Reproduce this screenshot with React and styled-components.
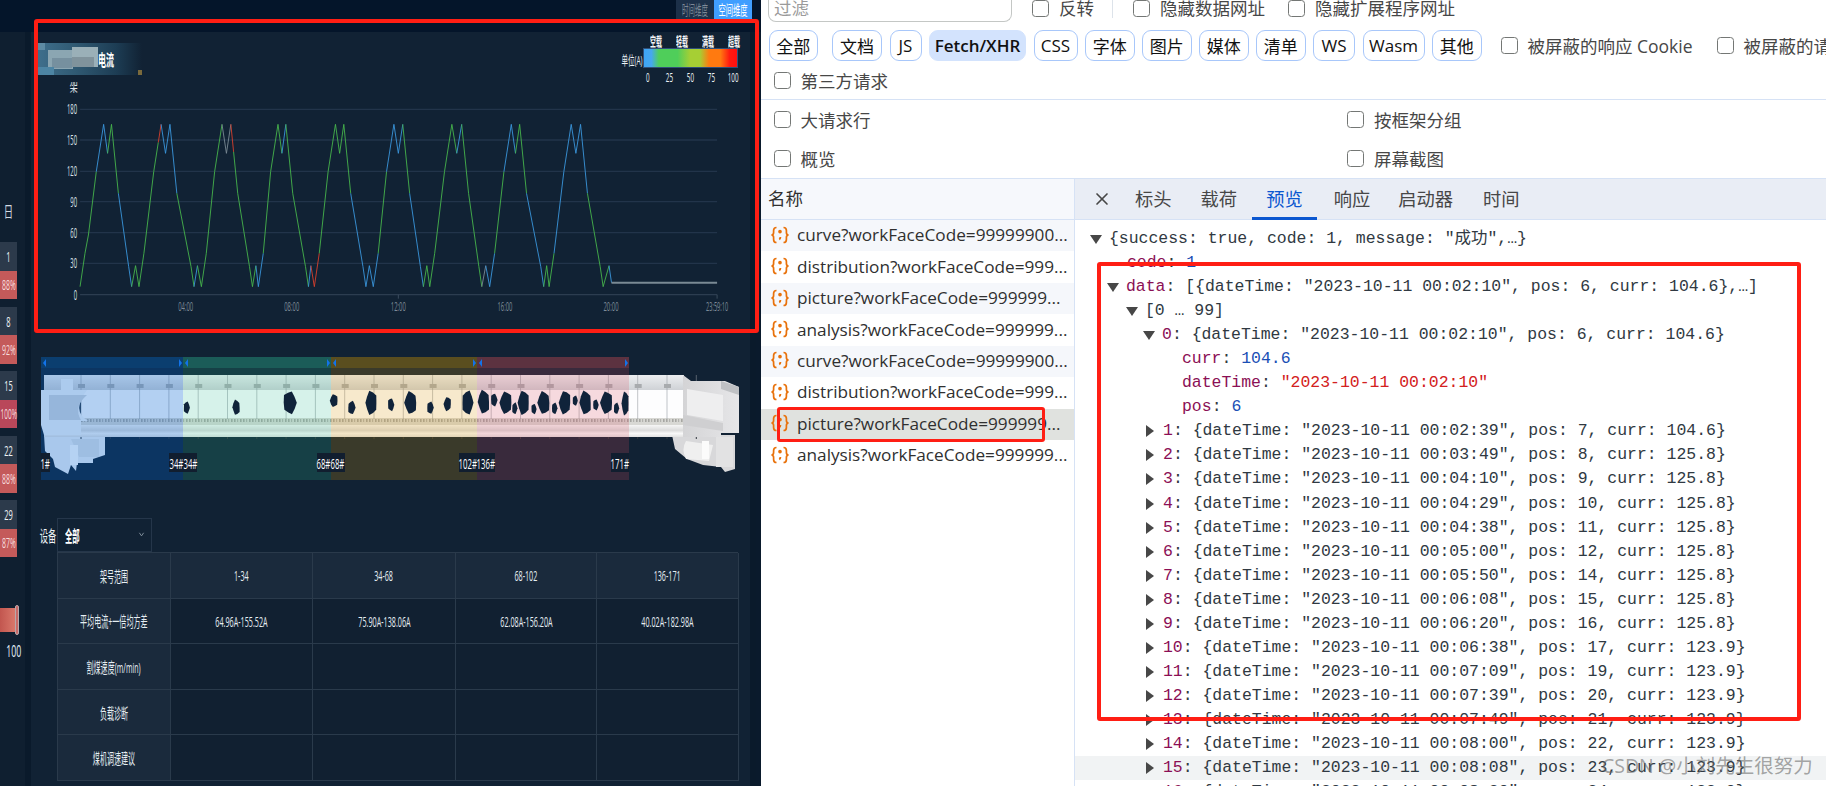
import React from 'react';
import styled, { createGlobalStyle } from 'styled-components';
import { ChevronDown, X } from 'lucide-react';

const CJK = '"Open Sans", "Noto Sans CJK SC", sans-serif';
const MONO = '"Liberation Mono", "Noto Sans CJK SC", monospace';

const GlobalStyle = createGlobalStyle`
  html, body { margin: 0; padding: 0; background: #fff; }
  body { font-family: ${CJK}; overflow: hidden; }
  * { box-sizing: border-box; }
`;

const Shell = styled.div`
  position: relative;
  display: flex;
  width: 1826px;
  height: 786px;
  overflow: hidden;
`;

/* ---------- left dashboard ---------- */

const LeftPane = styled.div`
  display: flex;
  flex-direction: column;
  flex: 0 0 761px;
  height: 786px;
  background: #0a1a2c;
  color: #dfe7ee;
`;

const TopBar = styled.div`
  display: flex;
  justify-content: flex-end;
  height: 32px;
  flex: none;
  padding-right: 9px;
  background: #04152a;
`;

const ModeButton = styled.div`
  display: flex;
  align-items: center;
  justify-content: center;
  width: 38px;
  height: 19px;
  font-size: 14px;
  line-height: 16px;
  color: ${p => (p.$active ? '#fff' : '#7d8997')};
  background: ${p => (p.$active ? '#409eff' : '#1c3049')};
`;

const Squeezed = styled.span`
  display: inline-block;
  flex: none;
  white-space: nowrap;
  transform: scaleX(${p => p.$x || 0.5});
  transform-origin: ${p => p.$origin || 'center'};
`;

const Body = styled.div`
  display: flex;
  flex: 1;
  min-height: 0;
`;

const Sidebar = styled.div`
  display: flex;
  flex-direction: column;
  flex: 0 0 25px;
  background: #0f1f30;
`;

const DayHead = styled.div`
  height: 20px;
  margin-top: 169px;
  width: 17px;
  text-align: center;
  font-size: 15px;
  line-height: 20px;
  color: #d3dbe2;
`;

const DayList = styled.div`
  display: flex;
  flex-direction: column;
  gap: 7.5px;
  margin-top: 21px;
`;

const DayNum = styled.div`
  display: flex;
  align-items: center;
  justify-content: center;
  width: 17px;
  height: 28.5px;
  font-size: 15px;
  color: #eef2f5;
  background: #2c3a4b;
`;

const DayRate = styled(DayNum)`
  font-size: 14px;
  color: #f6dcdc;
  background: ${p => (p.$full ? '#b9475a' : '#c45a5a')};
`;

const SideSlider = styled.div`
  display: flex;
  align-items: center;
  height: 30px;
  margin-top: 48px;
`;

const SliderFill = styled.div`
  width: 15px;
  height: 24px;
  background: linear-gradient(90deg, #c2564f, #d9776a);
`;

const SliderGrip = styled.div`
  width: 4px;
  height: 30px;
  border-radius: 2px;
  background: #c86a68;
  border: 1px solid #b9a7aa;
`;

const SideValue = styled.div`
  width: 22px;
  text-align: center;
  margin-top: 5px;
  font-size: 16px;
  color: #e4f2fb;
`;

const Gutter = styled.div`
  flex: 0 0 6px;
  background: #0a1a2b;
`;

const Main = styled.div`
  flex: 0 0 719px;
  padding-left: 7px;
  background: #112234;
`;

const ChartHead = styled.div`
  display: flex;
  justify-content: space-between;
  align-items: flex-start;
  height: 50px;
  padding-right: 12px;
`;

const TitleBanner = styled.svg`
  display: block;
  width: 104px;
  height: 32px;
  margin-top: 11px;
  background: linear-gradient(90deg, #3f6f8c 0%, #305a73 35%, #1d3d54 75%, #112234 100%);
`;

const Legend = styled.div`
  display: flex;
  align-items: center;
  gap: 1px;
  padding-top: 2px;
`;

const LegendUnit = styled.div`
  display: flex;
  justify-content: center;
  width: 20px;
  margin-top: 1px;
  font-size: 13px;
  color: #eef2f5;
`;

const LegendColumn = styled.div`
  display: flex;
  flex-direction: column;
  width: 95px;
`;

const LegendNames = styled.div`
  display: grid;
  grid-template-columns: repeat(4, 1fr);
  justify-items: center;
  height: 14px;
  font-size: 13px;
  line-height: 14px;
  font-weight: 600;
  color: #f4f6f8;
`;

const LegendBar = styled.div`
  position: relative;
  height: 20px;
  border: 1px solid #30507a;
  background: linear-gradient(90deg, #3ea5f5 0%, #46a8ee 8%, #4fce5a 16%, #4fce5a 36%, #a6cf34 50%, #a6cf34 60%, #ff7a10 70%, #ff7a10 82%, #ff1a10 92%, #ff1010 100%);
`;

const LegendTicks = styled.div`
  display: flex;
  justify-content: space-between;
  height: 14px;
  margin-top: 2px;
  font-size: 13px;
  line-height: 14px;
  color: #eef2f5;
`;

const LegendTick = styled.span`
  display: flex;
  justify-content: center;
  width: 10px;
`;

const ChartSvg = styled.svg`
  display: block;
  width: 712px;
  height: 240px;
  margin-left: -7px;
`;

const Stage = styled.div`
  position: relative;
  width: 698px;
  height: 123px;
  margin: 35px 0 0 3px;
`;

const MachineSvg = styled.svg`
  position: absolute;
  left: 0;
  top: 18px;
  width: 698px;
  height: 102px;
`;

const BandRow = styled.div`
  position: relative;
  display: flex;
  height: 123px;
`;

const Band = styled.div`
  display: flex;
  flex-direction: column;
  justify-content: space-between;
  width: ${p => p.$w}px;
  padding-bottom: 8px;
  background: ${p => p.$tint};
`;

const BandHead = styled.div`
  display: flex;
  justify-content: space-between;
  align-items: center;
  height: 11px;
  padding: 0 1px 0 2px;
  background: ${p => p.$color};
`;

const Arrow = styled.i`
  width: 0;
  height: 0;
  border-top: 4px solid transparent;
  border-bottom: 4px solid transparent;
  ${p => (p.$right ? 'border-left: 3px solid #1273ea;' : 'border-right: 3px solid #1273ea;')}
`;

const BandFoot = styled.div`
  display: flex;
  justify-content: space-between;
`;

const MarkChip = styled.div`
  display: flex;
  align-items: center;
  justify-content: center;
  width: ${p => p.$w}px;
  height: 19px;
  font-size: 15px;
  color: #fff;
  background: #111e2f;
`;

const FilterRow = styled.div`
  display: flex;
  align-items: center;
  margin-top: 38px;
  height: 34px;
`;

const FilterLabel = styled.div`
  display: flex;
  justify-content: center;
  width: 19px;
  font-size: 16px;
  color: #eef3f6;
`;

const SelectBox = styled.div`
  display: flex;
  align-items: center;
  justify-content: space-between;
  width: 95px;
  height: 34px;
  padding: 0 4px 0 7px;
  font-size: 16px;
  font-weight: 600;
  color: #fff;
  border: 1px solid #25364a;
  svg { color: #9aa7b3; transform: scaleX(.7); margin-top: -2px; }
`;

const Table = styled.div`
  display: grid;
  grid-template-columns: 113px 142px 143px 141px 142px;
  grid-auto-rows: 45.6px;
  width: 681px;
  margin-left: 19px;
  border-top: 1px solid #2a3a4b;
  border-left: 1px solid #2a3a4b;
`;

const Cell = styled.div`
  display: flex;
  align-items: center;
  justify-content: center;
  min-width: 0;
  font-size: 15px;
  color: #e6eef3;
  border-right: 1px solid #2a3a4b;
  border-bottom: 1px solid #2a3a4b;
  background: ${p => (p.$head ? '#1a2a3c' : '#112031')};
`;

/* ---------- devtools ---------- */

const RightPane = styled.div`
  display: flex;
  flex-direction: column;
  flex: 1;
  min-width: 0;
  font-size: 17.5px;
  color: #474747;
  background: #fff;
`;

const FilterBar = styled.div`
  display: flex;
  align-items: flex-start;
  height: 30px;
  padding-left: 7px;
  line-height: 17px;
`;

const FilterBox = styled.div`
  width: 244px;
  height: 22px;
  padding-left: 5px;
  color: #9a9a9a;
  border: 1px solid #c4c7c5;
  border-top: none;
  border-radius: 0 0 8px 8px;
`;

const Check = styled.label`
  display: flex;
  align-items: center;
  flex: none;
  gap: 10px;
  margin-left: ${p => p.$ml || 0}px;
  white-space: nowrap;
`;

const Box = styled.i`
  display: block;
  width: 17px;
  height: 17px;
  flex: none;
  border: 1.5px solid #747775;
  border-radius: 3.5px;
`;

const BarRule = styled.div`
  width: 1px;
  height: 18px;
  margin-left: 18px;
  background: #dde3ea;
`;

const TypeRow = styled.div`
  display: flex;
  align-items: center;
  height: 31px;
  padding-left: 7.5px;
  overflow: hidden;
`;

const Chip = styled.div`
  display: flex;
  align-items: center;
  justify-content: center;
  flex: none;
  width: ${p => p.$w}px;
  height: 31px;
  margin-left: ${p => p.$ml ?? 7.5}px;
  font-size: 17px;
  color: #111;
  border: 1px solid ${p => (p.$active ? '#d3e3fd' : '#a8c7fa')};
  border-radius: 9px;
  background: ${p => (p.$active ? '#d3e3fd' : '#fff')};
  font-weight: ${p => (p.$active ? 600 : 400)};
`;

const ChipRule = styled.div`
  width: 1px;
  height: 22px;
  margin-left: 7px;
  background: #dde3ea;
`;

const ThirdPartyRow = styled.div`
  display: flex;
  align-items: center;
  height: 39px;
  padding: 1px 0 0 12.6px;
  border-bottom: 1px solid #d6e2f5;
`;

const Options = styled.div`
  display: grid;
  grid-template-columns: 573.5px 1fr;
  grid-auto-rows: 39px;
  height: 79px;
  padding-left: 12.6px;
  border-bottom: 1px solid #d6e2f5;
`;

const Split = styled.div`
  display: flex;
  flex: 1;
  min-height: 0;
`;

const NamesCol = styled.div`
  flex: 0 0 314px;
  border-right: 1px solid #d6e2f5;
`;

const NamesHead = styled.div`
  display: flex;
  align-items: center;
  height: 41px;
  padding: 0 0 3px 7px;
  color: #303030;
  background: #f6f8fc;
  border-bottom: 1px solid #d6e2f5;
`;

const NameRow = styled.div`
  display: flex;
  align-items: center;
  gap: 7px;
  height: 31.45px;
  padding: 0 0 2px 9px;
  font-size: 17.2px;
  color: #303030;
  white-space: nowrap;
  background: ${p => (p.$selected ? '#e0e2df' : p.$odd ? '#f5f7fb' : '#fff')};
`;

const FetchIcon = styled.svg`
  width: 20px;
  height: 20px;
  flex: none;
  fill: none;
  stroke: #e8710a;
  stroke-width: 1.7;
`;

const DetailCol = styled.div`
  flex: 1;
  min-width: 0;
`;

const Tabs = styled.div`
  display: flex;
  align-items: stretch;
  height: 41px;
  padding: 0 0 0 17px;
  font-size: 18.3px;
  background: #e9edf5;
  border-bottom: 1px solid #d6e2f5;
  svg { align-self: center; color: #474747; }
`;

const Tab = styled.div`
  position: relative;
  display: flex;
  align-items: center;
  padding-bottom: 3px;
  margin-left: ${p => p.$ml}px;
  color: ${p => (p.$active ? '#0b57d0' : '#474747')};
  ${p => p.$active && `
    &::after {
      content: '';
      position: absolute;
      left: -14px;
      right: -14px;
      bottom: -1px;
      height: 3px;
      background: #0b57d0;
    }
  `}
`;

const Tree = styled.div`
  padding-top: 7px;
  font-family: ${MONO};
  font-size: 16.47px;
  line-height: 20px;
  color: #303942;
`;

const TreeRow = styled.div`
  display: flex;
  align-items: center;
  height: 24.05px;
  padding-left: ${p => p.$pad}px;
  white-space: pre;
  background: ${p => (p.$hover ? '#f1f3f4' : 'transparent')};
`;

const Caret = styled.i`
  flex: none;
  width: 0;
  height: 0;
  margin-left: -20px;
  ${p => (p.$open
    ? `margin-right: 7px;
       border-left: 6.5px solid transparent;
       border-right: 6.5px solid transparent;
       border-top: 9px solid #474747;`
    : `margin-left: -17px;
       margin-right: 9px;
       border-top: 6.5px solid transparent;
       border-bottom: 6.5px solid transparent;
       border-left: 8px solid #474747;`)}
`;

const Key = styled.span`
  color: #8b0f55;
`;

const Num = styled.span`
  color: #1a4fb5;
`;

const Str = styled.span`
  color: #d32020;
`;

const Callout = styled.div`
  position: absolute;
  left: ${p => p.$x}px;
  top: ${p => p.$y}px;
  width: ${p => p.$w}px;
  height: ${p => p.$h}px;
  border: ${p => p.$t || 4}px solid #ff1e14;
  border-radius: 3px;
`;

const Watermark = styled.div`
  position: absolute;
  left: 1602px;
  top: 752px;
  font-family: "Open Sans", "Noto Sans CJK SC", sans-serif;
  font-size: 19.5px;
  line-height: 28px;
  white-space: nowrap;
  color: rgba(110, 110, 110, 0.62);
`;

/* ---------- data ---------- */

const days = [
  ['1', '88%'], ['8', '92%'], ['15', '100%', true], ['22', '88%'], ['29', '87%'],
];

const bands = [
  { w: 142, tint: 'rgba(0,100,215,.29)', head: '#0b3e6f', from: ['1#', 9], to: ['34#', 14] },
  { w: 147.5, tint: 'rgba(48,197,147,.19)', head: '#1b5c58', from: ['34#', 14], to: ['68#', 14] },
  { w: 146.5, tint: 'rgba(227,155,7,.2)', head: '#5a4e1f', from: ['68#', 14], to: ['102#', 18] },
  { w: 152, tint: 'rgba(222,75,97,.2)', head: '#5c3240', from: ['136#', 18], to: ['171#', 18] },
];

const tableRows = [
  ['架号范围', '1-34', '34-68', '68-102', '136-171'],
  ['平均电流+一倍均方差', '64.96A-155.52A', '75.90A-138.06A', '62.08A-156.20A', '40.02A-182.98A'],
  ['割煤速度(m/min)', '', '', '', ''],
  ['负载诊断', '', '', '', ''],
  ['煤机调速建议', '', '', '', ''],
];

const chips = [
  ['全部', 49.5], ['文档', 50], ['JS', 32], ['Fetch/XHR', 97, true], ['CSS', 44], ['字体', 49.5],
  ['图片', 49.5], ['媒体', 49.5], ['清单', 49.5], ['WS', 42], ['Wasm', 62], ['其他', 49.5],
];

const names = [
  'curve?workFaceCode=99999900...',
  'distribution?workFaceCode=999...',
  'picture?workFaceCode=999999...',
  'analysis?workFaceCode=999999...',
  'curve?workFaceCode=99999900...',
  'distribution?workFaceCode=999...',
  'picture?workFaceCode=999999...',
  'analysis?workFaceCode=999999...',
];

const records = [
  ['00:02:39', 7, '104.6'], ['00:03:49', 8, '125.8'], ['00:04:10', 9, '125.8'], ['00:04:29', 10, '125.8'],
  ['00:04:38', 11, '125.8'], ['00:05:00', 12, '125.8'], ['00:05:50', 14, '125.8'], ['00:06:08', 15, '125.8'],
  ['00:06:20', 16, '125.8'], ['00:06:38', 17, '123.9'], ['00:07:09', 19, '123.9'], ['00:07:39', 20, '123.9'],
  ['00:07:49', 21, '123.9'], ['00:08:00', 22, '123.9'], ['00:08:08', 23, '123.9'], ['00:08:20', 24, '123.9'],
];

/* ---------- chart ---------- */

// measured from the picture: x in 2.036 px units, y in 3 px units
const px = x => x / 2.036 - 31;
const py = y => y / 3 - 82;

const seriesColors = { g: '#46b44c', b: '#3a96dc', r: '#d8402c', y: '#7a8a94' };

// colour keys: rise a, rise b, dip down, dip up, fall a, fall b, small up, small down
// 'x>y' changes colour part way along the segment
const cycles = [
  { p: 211, q: 227, t: 268, s: 276, u: 283, c: ['g', 'b', 'b', 'g', 'g', 'b', 'g', 'g'] },
  { p: 328, q: 346, t: 395, s: 402, u: 410, c: ['g', 'g>r', 'b', 'b', 'b', 'g', 'b', 'g'] },
  { p: 452, q: 470, t: 514, s: 521, u: 526, c: ['g', 'g', 'y', 'y', 'r>g', 'g', 'g', 'b'] },
  { p: 566, q: 582, t: 628, s: 633, u: 640, c: ['g', 'g', 'g', 'b', 'g', 'g', 'b', 'r'] },
  { p: 683, q: 700, t: 745, s: 752, u: 760, c: ['g', 'g', 'g', 'g', 'g', 'b', 'b', 'b'] },
  { p: 802, q: 820, t: 862, s: 869, u: 875, c: ['g', 'b', 'b', 'b', 'g', 'b', 'g', 'g'] },
  { p: 920, q: 940, t: 981, s: 989, u: 997, c: ['g', 'g', 'g', 'b', 'g', 'g', 'y', 'b'] },
  { p: 1041, q: 1058, t: 1107, s: 1113, u: 1118, c: ['g', 'b', 'b', 'g', 'g', 'b', 'g', 'g'] },
  { p: 1163, q: 1182, t: 1228, s: 1240, u: 1245, c: ['b', 'b', 'b', 'b', 'b', 'g', 'g', 'b'] },
];

function buildSegments() {
  const segs = [];
  let prev = [163, 860];
  const add = (to, key) => {
    const [first, second] = key.split('>');
    if (second) {
      const f = first === 'r' ? 0.4 : 0.62;
      const mid = [prev[0] + (to[0] - prev[0]) * f, prev[1] + (to[1] - prev[1]) * f];
      segs.push({ a: prev, b: mid, color: seriesColors[first] });
      segs.push({ a: mid, b: to, color: seriesColors[second] });
    } else {
      segs.push({ a: prev, b: to, color: seriesColors[first] });
    }
    prev = to;
  };
  add([173, 760], 'g');
  add([180, 705], 'g');
  cycles.forEach((k, i) => {
    const last = i === cycles.length - 1;
    add([k.p - 15, 515], k.c[0]);
    add([k.p, 373], k.c[1]);
    add([(k.p + k.q) / 2, 460], k.c[2]);
    add([k.q, 373], k.c[3]);
    add([k.q + 14, 580], k.c[4]);
    add([k.t - 6, 800], k.c[5]);
    add([k.t, 860], k.c[5]);
    add([k.s, 797], k.c[6]);
    add([k.u, last ? 848 : 860], k.c[7]);
    if (!last) {
      add([k.u + 10, 760], k.c[7]);
    }
  });
  return segs;
}

const segments = buildSegments();
const gridRows = [[180, 328], [150, 420], [120, 514], [90, 605], [60, 698], [30, 790], [0, 884]];
const timeTicks = [['04:00', 378, 15], ['08:00', 594, 15], ['12:00', 811, 15], ['16:00', 1028, 15], ['20:00', 1244, 15], ['23:59:10', 1460, 22]];

const CurrentChart = () => (
  <ChartSvg viewBox="0 0 712 240">
    <text x={px(150)} y={py(274)} textLength="8" lengthAdjust="spacingAndGlyphs" textAnchor="middle" fontSize="13" fill="#e0e5ea">架</text>
    {gridRows.map(([label, y]) => (
      <g key={label}>
        <line x1={px(163)} x2={px(1460)} y1={py(y)} y2={py(y)} stroke={label === 0 ? '#2c3d50' : '#22344a'} strokeWidth="1.4" />
        <text x={px(157)} y={py(y) + 5} textAnchor="end" textLength={String(label).length * 3.4} lengthAdjust="spacingAndGlyphs" fontSize="14" fill="#dbe1e6">{label}</text>
      </g>
    ))}
    {timeTicks.map(([label, x, w]) => (
      <text key={label} x={px(x)} y={py(918) + 5} textAnchor="middle" textLength={w} lengthAdjust="spacingAndGlyphs" fontSize="13" fill="#7d8a97">{label}</text>
    ))}
    <line x1={px(811)} x2={px(811)} y1={py(884)} y2={py(896)} stroke="#3c4c5e" />
    <line x1={px(1460)} x2={px(1460)} y1={py(884)} y2={py(896)} stroke="#3c4c5e" />
    {segments.map((s, i) => (
      <line key={i} x1={px(s.a[0])} y1={py(s.a[1])} x2={px(s.b[0])} y2={py(s.b[1])} stroke={s.color} strokeWidth="0.9" />
    ))}
    <line x1={px(1245)} x2={px(1460)} y1={py(848)} y2={py(848)} stroke="#7a8a94" strokeWidth="2" />
  </ChartSvg>
);

/* ---------- shearer drawing ---------- */

const blobs = [
  [380, 12, 35, 203], [481, 14, 45, 202], [590, 24, 70, 188], [680, 14, 40, 182], [716, 14, 40, 203],
  [756, 22, 70, 188], [796, 12, 38, 194], [836, 22, 70, 188], [876, 12, 38, 203], [911, 14, 42, 192],
  [952, 22, 70, 188], [985, 22, 70, 186], [1006, 12, 40, 180], [1030, 22, 70, 188], [1048, 10, 35, 205],
  [1066, 22, 70, 188], [1087, 10, 30, 207], [1107, 22, 70, 188], [1129, 10, 36, 205], [1150, 22, 70, 188],
  [1171, 10, 30, 182], [1192, 22, 70, 188], [1213, 10, 34, 195], [1235, 22, 70, 188], [1255, 10, 34, 205],
  [1273, 14, 70, 190],
];
const lumps = [1, 0.88, 1.08, 0.92, 1.04, 0.86, 1.02, 0.94, 1.1, 0.9];
const panelLines = Array.from({ length: 22 }, (_, i) => 40 + i * 29.3);

function blobPath(cx, cy, rx, ry, seed) {
  const pts = lumps.map((_, i) => {
    const k = lumps[(i + seed) % lumps.length];
    const a = (i / lumps.length) * Math.PI * 2;
    return `${(cx + Math.cos(a) * rx * k).toFixed(1)},${(cy + Math.sin(a) * ry * k).toFixed(1)}`;
  });
  return `M${pts.join(' L')} Z`;
}

const Machine = () => (
  <MachineSvg viewBox="0 0 698 102">
    <defs>
      <linearGradient id="capGrad" x1="0" y1="0" x2="0" y2="1">
        <stop offset="0" stopColor="#eceef0" />
        <stop offset="1" stopColor="#cfd2d6" />
      </linearGradient>
      <linearGradient id="railGrad" x1="0" y1="0" x2="0" y2="1">
        <stop offset="0" stopColor="#f6f6f6" />
        <stop offset=".45" stopColor="#dcdcdc" />
        <stop offset=".7" stopColor="#f8f8f8" />
        <stop offset="1" stopColor="#e2e2e2" />
      </linearGradient>
      <linearGradient id="endGrad" x1="0" y1="0" x2="1" y2="0">
        <stop offset="0" stopColor="#d4d4d6" />
        <stop offset="1" stopColor="#e6e6e8" />
      </linearGradient>
      <pattern id="rackDots" width="9" height="7" patternUnits="userSpaceOnUse">
        <rect width="9" height="7" fill="#d8d8d4" />
        <rect x="1" y="2" width="1.6" height="3" fill="#a6a6a2" />
        <rect x="4" y="2" width="1.6" height="3" fill="#a6a6a2" />
        <rect x="7" y="2" width="1.2" height="3" fill="#b2b2ae" />
      </pattern>
    </defs>
    {/* left foot */}
    <path d="M3 60 H64 V80 L52 84 V88 H36 L35 96 L30 90 L27 99 L14 92 L12 84 L4 76 Z" fill="#eef1f5" />
    <path d="M30 64 H58 V82 H38 Z" fill="#dfe3e8" />
    <rect x="29" y="70" width="8" height="20" fill="#ffffff" />
    {/* right foot */}
    <path d="M631 60 H694 V94 L684 97 L680 92 L662 90 L646 84 L634 74 Z" fill="#d8d8da" />
    <path d="M645 66 Q640 74 645 84 L668 86 L672 70 Z" fill="#efefef" />
    <path d="M661 66 H668 V84 H661 Z" fill="#fbfbfb" />
    <rect x="675" y="62" width="17" height="30" fill="#e2e2e3" />
    {/* long body */}
    <rect x="40" y="14" width="602" height="32" fill="#fdfdfe" />
    <rect x="3" y="0" width="640" height="15" fill="url(#capGrad)" />
    <rect x="40" y="43" width="602" height="7" fill="url(#rackDots)" />
    <rect x="3" y="50" width="640" height="12" fill="url(#railGrad)" />
    {panelLines.map((x, i) => (
      <g key={i}>
        <line x1={x} x2={x} y1="0" y2="44" stroke="#8f959c" strokeOpacity=".55" />
        <rect x={x - 3} y="9" width="7" height="4" fill="#a8abae" />
        <line x1={x} x2={x} y1="62" y2="64" stroke="#30363c" />
      </g>
    ))}
    {/* left housing */}
    <path d="M0 15 H20 V4 H32 V15 H46 Q30 36 47 46 H40 V60 H3 L0 50 Z" fill="#f3f5f8" />
    <path d="M8 20 H46 Q32 32 40 45 H8 Z" fill="#d3d8de" />
    {/* right housing */}
    <path d="M642 0 L650 6 H684 L698 12 V58 H680 V62 H642 Z" fill="url(#endGrad)" />
    <path d="M646 14 L682 20 V46 L646 40 Z" fill="#eeeeef" />
    <path d="M680 6 L698 12 V20 L680 14 Z" fill="#bfc1c4" />
    <path d="M642 40 L682 48 V56 L642 50 Z" fill="#cfcfd1" />
  </MachineSvg>
);

// the cut marks sit above the band tints, they stay dark in every band
const CutMarks = () => (
  <MachineSvg viewBox="0 0 698 102">
    {blobs.map(([x, w, h, y], i) => {
      const cx = x / 2.036 - 41;
      const cy = y / 3 + 340 - 375;
      const rx = w / 2.036 / 2;
      const ry = h / 3 / 2;
      return <path key={i} d={blobPath(cx, cy, rx * 1.1, ry, i)} fill="#10233a" />;
    })}
  </MachineSvg>
);

const ListIcon = () => (
  <FetchIcon viewBox="0 0 20 20">
    <path d="M6.5 2.5 C4 2.5 3.6 4 3.6 5.6 V7.6 C3.6 9 2.6 10 1.4 10 C2.6 10 3.6 11 3.6 12.4 V14.4 C3.6 16 4 17.5 6.5 17.5" />
    <path d="M13.5 2.5 C16 2.5 16.4 4 16.4 5.6 V7.6 C16.4 9 17.4 10 18.6 10 C17.4 10 16.4 11 16.4 12.4 V14.4 C16.4 16 16 17.5 13.5 17.5" />
    <circle cx="10" cy="6.6" r="1" fill="#e8710a" />
    <path d="M10.4 12 C10.4 13.2 10 14 9.2 14.4" strokeWidth="1.9" />
  </FetchIcon>
);

const Record = ({ index, rec }) => (
  <TreeRow $pad={88} $hover={index === 15}>
    <Caret />
    <Key>{index}</Key>: {`{dateTime: "2023-10-11 ${rec[0]}", pos: ${rec[1]}, curr: ${rec[2]}}`}
  </TreeRow>
);

const CheckItem = ({ ml, children }) => (
  <Check $ml={ml}>
    <Box />
    {children}
  </Check>
);

export default function App() {
  return (
    <Shell>
      <GlobalStyle />
      <LeftPane>
        <TopBar>
          <ModeButton><Squeezed $x={0.46}>时间维度</Squeezed></ModeButton>
          <ModeButton $active><Squeezed $x={0.52}>空间维度</Squeezed></ModeButton>
        </TopBar>
        <Body>
          <Sidebar>
            <DayHead><Squeezed $x={0.62}>日</Squeezed></DayHead>
            <DayList>
              {days.map(([d, rate, full]) => (
                <div key={d}>
                  <DayNum><Squeezed>{d}</Squeezed></DayNum>
                  <DayRate $full={full}><Squeezed $x={full ? 0.46 : 0.5}>{rate}</Squeezed></DayRate>
                </div>
              ))}
            </DayList>
            <SideSlider>
              <SliderFill />
              <SliderGrip />
            </SideSlider>
            <SideValue><Squeezed $x={0.55}>100</Squeezed></SideValue>
          </Sidebar>
          <Gutter />
          <Main>
            <ChartHead>
              <TitleBanner viewBox="0 0 104 32">
                <rect x="10" y="7" width="25" height="19" fill="#8ba6b2" />
                <rect x="34" y="4" width="26" height="20" fill="#9ab0b8" />
                <rect x="14" y="15" width="20" height="10" fill="#76909f" />
                <rect x="34" y="14" width="22" height="10" fill="#80939c" />
                <rect x="0" y="0" width="7" height="7" fill="#5d8aa3" />
                <rect x="0" y="24" width="16" height="8" fill="#4d85a4" />
                <rect x="100" y="27" width="4" height="5" fill="#7a6a3c" />
                <text x="60" y="23" textLength="16" lengthAdjust="spacingAndGlyphs" fontSize="16" fontWeight="700" fill="#fff">电流</text>
              </TitleBanner>
              <Legend>
                <LegendUnit><Squeezed $x={0.5}>单位(A)</Squeezed></LegendUnit>
                <LegendColumn>
                  <LegendNames>
                    {['空载', '轻载', '满载', '超载'].map(n => (
                      <Squeezed key={n} $x={0.46}>{n}</Squeezed>
                    ))}
                  </LegendNames>
                  <LegendBar />
                  <LegendTicks>
                    {['0', '25', '50', '75', '100'].map(n => (
                      <LegendTick key={n}><Squeezed $x={0.48}>{n}</Squeezed></LegendTick>
                    ))}
                  </LegendTicks>
                </LegendColumn>
              </Legend>
            </ChartHead>
            <CurrentChart />
            <Stage>
              <Machine />
              <BandRow>
                {bands.map(b => (
                  <Band key={b.head} $w={b.w} $tint={b.tint}>
                    <BandHead $color={b.head}>
                      <Arrow />
                      <Arrow $right />
                    </BandHead>
                    <BandFoot>
                      <MarkChip $w={b.from[1]}><Squeezed $x={0.52}>{b.from[0]}</Squeezed></MarkChip>
                      <MarkChip $w={b.to[1]}><Squeezed $x={0.52}>{b.to[0]}</Squeezed></MarkChip>
                    </BandFoot>
                  </Band>
                ))}
              </BandRow>
              <CutMarks />
            </Stage>
            <FilterRow>
              <FilterLabel><Squeezed $x={0.52}>设备</Squeezed></FilterLabel>
              <SelectBox>
                <Squeezed $origin="left" $x={0.46}>全部</Squeezed>
                <ChevronDown size={11} />
              </SelectBox>
            </FilterRow>
            <Table>
              {tableRows.flatMap((row, r) => row.map((text, c) => (
                <Cell key={`${r}-${c}`} $head={r === 0 || c === 0}>
                  {text && <Squeezed $x={c === 0 ? 0.47 : 0.48}>{text}</Squeezed>}
                </Cell>
              )))}
            </Table>
          </Main>
          <Gutter />
        </Body>
      </LeftPane>

      <RightPane>
        <FilterBar>
          <FilterBox>过滤</FilterBox>
          <CheckItem ml={20}>反转</CheckItem>
          <BarRule />
          <CheckItem ml={20}>隐藏数据网址</CheckItem>
          <CheckItem ml={23}>隐藏扩展程序网址</CheckItem>
        </FilterBar>
        <TypeRow>
          {chips.map(([label, w, active], i) => (
            <React.Fragment key={label}>
              <Chip $w={w} $active={active} $ml={i === 0 ? 0 : i === 1 ? 7 : 7.5}>{label}</Chip>
              {i === 0 && <ChipRule />}
            </React.Fragment>
          ))}
          <CheckItem ml={19}>被屏蔽的响应 Cookie</CheckItem>
          <CheckItem ml={24}>被屏蔽的请求</CheckItem>
        </TypeRow>
        <ThirdPartyRow>
          <CheckItem>第三方请求</CheckItem>
        </ThirdPartyRow>
        <Options>
          <CheckItem>大请求行</CheckItem>
          <CheckItem>按框架分组</CheckItem>
          <CheckItem>概览</CheckItem>
          <CheckItem>屏幕截图</CheckItem>
        </Options>
        <Split>
          <NamesCol>
            <NamesHead>名称</NamesHead>
            {names.map((n, i) => (
              <NameRow key={i} $odd={i % 2 === 0} $selected={i === 6}>
                <ListIcon />
                {n}
              </NameRow>
            ))}
          </NamesCol>
          <DetailCol>
            <Tabs>
              <X size={20} strokeWidth={2} />
              <Tab $ml={23}>标头</Tab>
              <Tab $ml={29}>载荷</Tab>
              <Tab $ml={29} $active>预览</Tab>
              <Tab $ml={31}>响应</Tab>
              <Tab $ml={28}>启动器</Tab>
              <Tab $ml={30}>时间</Tab>
            </Tabs>
            <Tree>
              <TreeRow $pad={35}><Caret $open />{'{success: true, code: 1, message: "成功",…}'}</TreeRow>
              <TreeRow $pad={52}><Key>code</Key>: <Num>1</Num></TreeRow>
              <TreeRow $pad={52}><Caret $open /><Key>data</Key>: {'[{dateTime: "2023-10-11 00:02:10", pos: 6, curr: 104.6},…]'}</TreeRow>
              <TreeRow $pad={71}><Caret $open />[0 … 99]</TreeRow>
              <TreeRow $pad={88}><Caret $open /><Key>0</Key>: {'{dateTime: "2023-10-11 00:02:10", pos: 6, curr: 104.6}'}</TreeRow>
              <TreeRow $pad={107}><Key>curr</Key>: <Num>104.6</Num></TreeRow>
              <TreeRow $pad={107}><Key>dateTime</Key>: <Str>"2023-10-11 00:02:10"</Str></TreeRow>
              <TreeRow $pad={107}><Key>pos</Key>: <Num>6</Num></TreeRow>
              {records.map((rec, i) => (
                <Record key={i} index={i + 1} rec={rec} />
              ))}
            </Tree>
          </DetailCol>
        </Split>
      </RightPane>

      <Callout $x={34} $y={19} $w={725} $h={314} />
      <Callout $x={777} $y={407} $w={268} $h={35} $t={3.5} />
      <Callout $x={1097} $y={262} $w={704} $h={459} />
      <Watermark>CSDN @小刘先生很努力</Watermark>
    </Shell>
  );
}
